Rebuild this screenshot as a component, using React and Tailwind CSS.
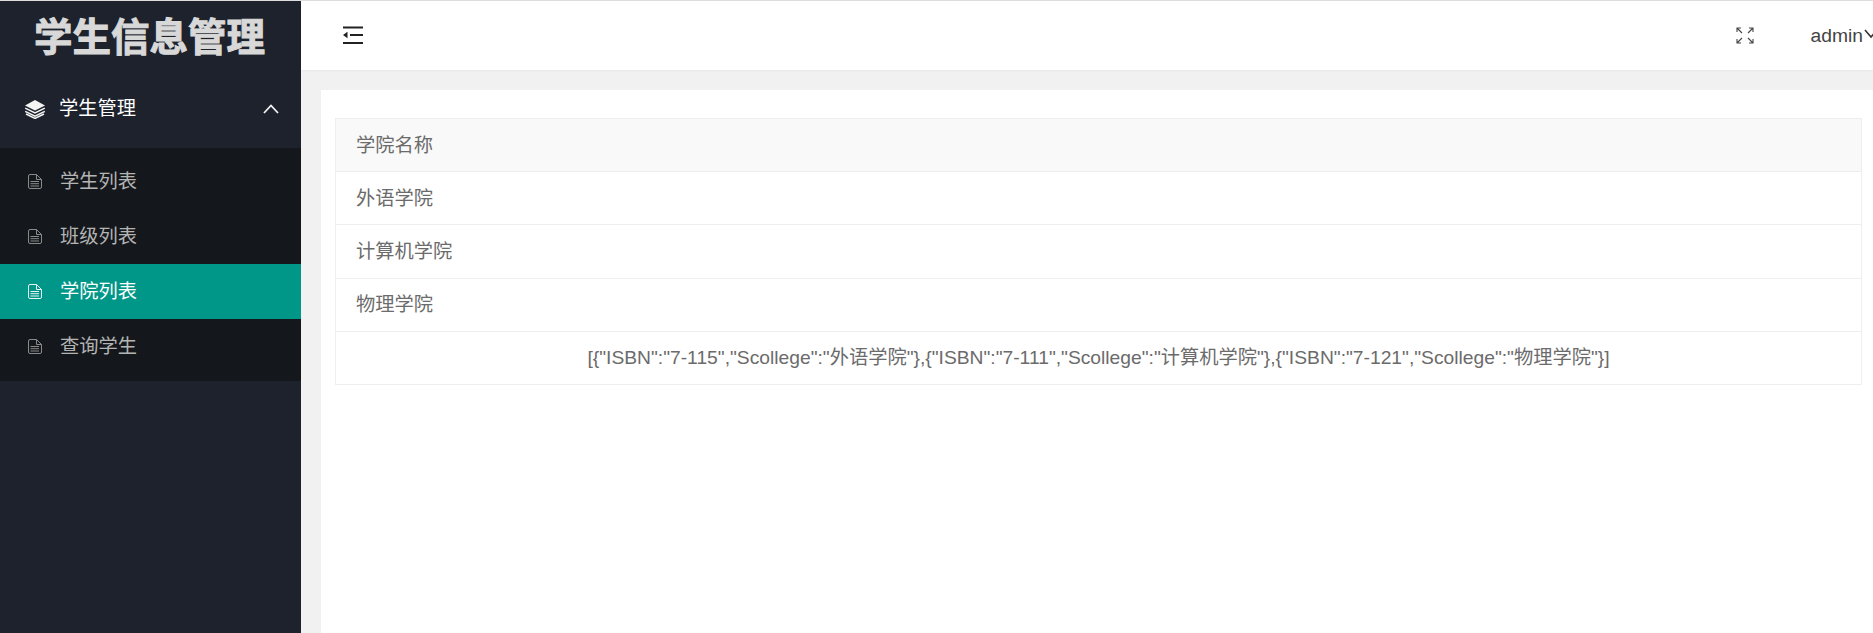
import React from 'react'

const FONT = "font-['Liberation_Sans','Noto_Sans_CJK_SC',sans-serif]"

const LayersIcon = () => (
    <svg width="22" height="20" viewBox="0 0 22 20" className="shrink-0">
        <path d="M11 1 L21 6.5 L11 11.5 L1 6.5 Z" fill="#f4f4f4" />
        <path d="M1.2 9.2 L11 14 L20.8 9.2 M1.2 12.4 L11 17.2 L20.8 12.4 M2 15 L11 19.4 L20 15" fill="none" stroke="#f4f4f4" strokeWidth="1.5" />
    </svg>
)

const FileIcon = ({ color }) => (
    <svg width="14" height="15" viewBox="0 0 14 15" fill="none" stroke={color} strokeWidth="1" className="shrink-0">
        <path d="M0.5 2 Q0.5 0.5 2 0.5 H8.5 L13.5 5.5 V13 Q13.5 14.5 12 14.5 H2 Q0.5 14.5 0.5 13 Z" />
        <path d="M8.5 0.5 V5.5 H13.5 M2.5 7.5 H11 M2.5 9.7 H11 M2.5 12 H11" />
    </svg>
)

const FoldIcon = () => (
    <svg width="22" height="19" viewBox="0 0 22 19" className="shrink-0" fill="#222">
        <rect x="1" y="0.5" width="20" height="2" />
        <rect x="8" y="8" width="13" height="2" />
        <rect x="1" y="16" width="20" height="2" />
        <path d="M1 9 L5.5 5.8 V12.2 Z" />
    </svg>
)

const ExpandIcon = () => (
    <svg width="18" height="17" viewBox="0 0 18 17" fill="none" stroke="#444" strokeWidth="1.1" className="shrink-0">
        <path d="M1 5 V1 H5 M1 1 L6 6" />
        <path d="M13 1 H17 V5 M17 1 L12 6" />
        <path d="M1 12 V16 H5 M1 16 L6 11" />
        <path d="M13 16 H17 V12 M17 16 L12 11" />
    </svg>
)

const subMenus = [
    { name: '学生列表' },
    { name: '班级列表' },
    { name: '学院列表', active: true },
    { name: '查询学生' },
]

const colleges = ['外语学院', '计算机学院', '物理学院']

const jsonText = '[{"ISBN":"7-115","Scollege":"外语学院"},{"ISBN":"7-111","Scollege":"计算机学院"},{"ISBN":"7-121","Scollege":"物理学院"}]'

const App = () => {
    return (
        <div className={`flex h-[633px] w-[1873px] overflow-hidden border-t border-[#dddddd] bg-[#f1f1f1] ${FONT}`}>
            <aside className="flex w-[301px] shrink-0 flex-col bg-[#1e222c]">
                <div className="flex h-[69px] items-center justify-center pt-[4px] pr-[2px] text-[38.5px] font-bold text-[#d8d8d8] [-webkit-text-stroke:1px_#d8d8d8]">
                    学生信息管理
                </div>
                <div className="flex h-[78px] items-center pl-[24px] pr-[22px] text-[19.25px] text-white">
                    <LayersIcon />
                    <span className="ml-[13px] flex-1">学生管理</span>
                    <svg width="16" height="10" viewBox="0 0 16 10" fill="none" stroke="#f4f4f4" strokeWidth="1.8">
                        <path d="M1 9 L8 1.5 L15 9" />
                    </svg>
                </div>
                <div className="bg-[#14181c] pt-[6px] pb-[7px]">
                    {subMenus.map((item) => (
                        <div
                            key={item.name}
                            className={`flex h-[55px] items-center pl-[28px] text-[19.25px] ${item.active ? 'bg-[#009688] text-white' : 'text-[#b4b4b4]'}`}
                        >
                            <FileIcon color={item.active ? '#e6f5f3' : '#8a8a8a'} />
                            <span className="ml-[18px] pt-[2px]">{item.name}</span>
                        </div>
                    ))}
                </div>
            </aside>

            <main className="flex min-w-0 flex-1 flex-col">
                <header className="flex h-[69px] shrink-0 items-center overflow-hidden bg-white pl-[41px] shadow-[0_1px_2px_rgba(0,0,0,0.04)]">
                    <FoldIcon />
                    <div className="ml-auto mr-[-5px] flex items-center">
                        <ExpandIcon />
                        <span className="ml-[57px] pt-[2px] text-[19.25px] text-[#444444]">admin</span>
                        <svg width="14" height="10" viewBox="0 0 14 10" fill="none" stroke="#333" strokeWidth="1.6" className="ml-[1px] shrink-0 -translate-y-[2px]">
                            <path d="M1 1 L7 8 L13 1" />
                        </svg>
                    </div>
                </header>

                <div className="min-h-0 flex-1 pt-[20px] pl-[20px]">
                    <div className="h-full bg-white pt-[28px] pr-[11px] pl-[14px]">
                        <table className="w-full border-collapse text-[19.25px] text-[#6b6b6b]">
                            <thead>
                                <tr className="h-[53px] border border-[#eeeeee] bg-[#f9f9f9]">
                                    <th className="pt-[2px] pl-[20px] text-left font-normal">学院名称</th>
                                </tr>
                            </thead>
                            <tbody>
                                {colleges.map((name) => (
                                    <tr key={name} className="h-[53.25px] border border-[#eeeeee]">
                                        <td className="pt-[2px] pl-[20px]">{name}</td>
                                    </tr>
                                ))}
                                <tr className="h-[53.25px] border border-[#eeeeee]">
                                    <td className="pt-[2px] text-center">{jsonText}</td>
                                </tr>
                            </tbody>
                        </table>
                    </div>
                </div>
            </main>
        </div>
    )
}

export default App
